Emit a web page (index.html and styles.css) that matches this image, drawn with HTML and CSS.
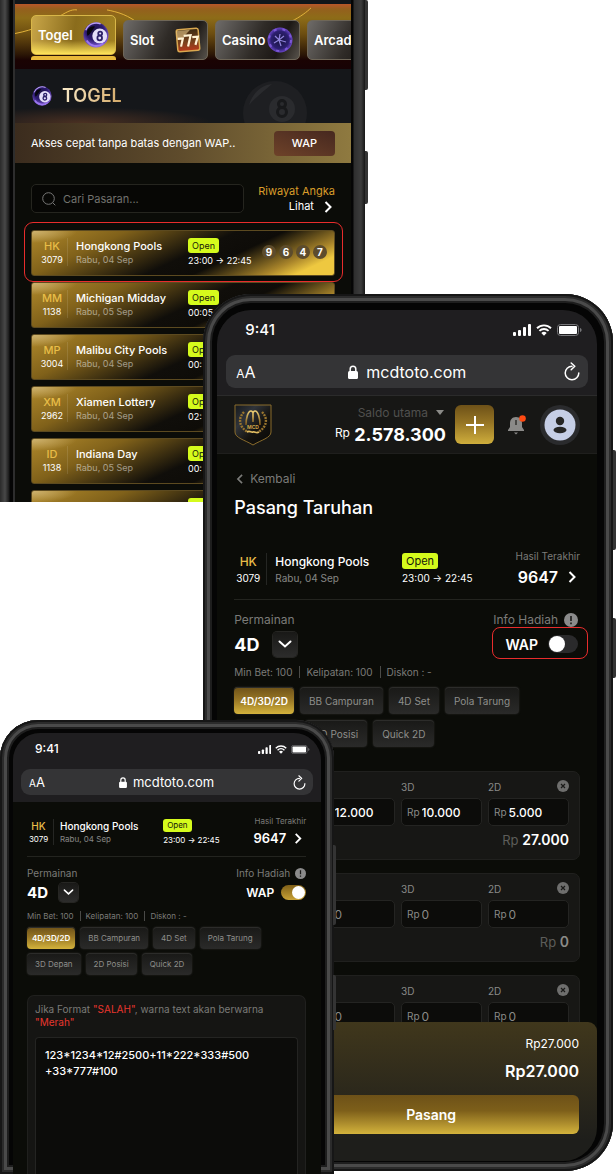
FILE: index.html
```html
<!DOCTYPE html>
<html lang="id">
<head>
  <meta charset="UTF-8">
  <meta name="viewport" content="width=device-width, initial-scale=1">
  <title>MCDTOTO - Panduan WAP</title>
  <link rel="stylesheet" href="styles.css">
</head>
<body>

  <!-- shared icons -->
  <svg class="sprite" aria-hidden="true">
    <defs>
      <linearGradient id="gold" x1="0" y1="0" x2="0" y2="1">
        <stop offset="0" stop-color="#e9cb74"/>
        <stop offset="1" stop-color="#7a5416"/>
      </linearGradient>
      <linearGradient id="shieldFill" x1="0" y1="0" x2="1" y2="1">
        <stop offset="0" stop-color="#15181c"/>
        <stop offset=".3" stop-color="#30343a"/>
        <stop offset=".6" stop-color="#15130f"/>
        <stop offset="1" stop-color="#080808"/>
      </linearGradient>
      <radialGradient id="purple" cx=".45" cy=".35" r=".65">
        <stop offset="0" stop-color="#1a1240"/>
        <stop offset=".55" stop-color="#2c1a70"/>
        <stop offset="1" stop-color="#8a63e0"/>
      </radialGradient>
      <radialGradient id="chipFill">
        <stop offset="0" stop-color="#16123a"/>
        <stop offset=".7" stop-color="#2c1f70"/>
        <stop offset="1" stop-color="#6a45c8"/>
      </radialGradient>
      <linearGradient id="slotFill" x1="0" y1="0" x2="0" y2="1">
        <stop offset="0" stop-color="#3a2a12"/>
        <stop offset=".6" stop-color="#7a431c"/>
        <stop offset="1" stop-color="#b8381a"/>
      </linearGradient>
    </defs>
    <symbol id="i-signal" viewBox="0 0 18 12">
      <rect x="0" y="8" width="3" height="4" rx="1"/>
      <rect x="5" y="6" width="3" height="6" rx="1"/>
      <rect x="10" y="3" width="3" height="9" rx="1"/>
      <rect x="15" y="0" width="3" height="12" rx="1"/>
    </symbol>
    <symbol id="i-wifi" viewBox="0 0 16 12">
      <path d="M1 4.2a10 10 0 0 1 14 0M3.4 6.9a6.6 6.6 0 0 1 9.2 0" fill="none" stroke="currentColor" stroke-width="1.9"/>
      <path d="M8 11.8 5.3 9a4 4 0 0 1 5.4 0z"/>
    </symbol>
    <symbol id="i-battery" viewBox="0 0 25 12">
      <rect x=".5" y=".5" width="21" height="11" rx="3" fill="none" stroke="#77777a"/>
      <rect x="2" y="2" width="18" height="8" rx="1"/>
      <path d="M23 4v4c1-.4 1.6-1.1 1.6-2S24 4.4 23 4z" fill="#77777a"/>
    </symbol>
    <symbol id="i-lock" viewBox="0 0 10 14">
      <rect x="0" y="6" width="10" height="8" rx="1.5"/>
      <path d="M2.2 7V4a2.8 2.8 0 0 1 5.6 0v3" fill="none" stroke="currentColor" stroke-width="1.5"/>
    </symbol>
    <symbol id="i-reload" viewBox="0 0 16 19">
      <path d="M8 4.2A6.8 6.8 0 1 0 14.8 11" fill="none" stroke="currentColor" stroke-width="1.5" stroke-linecap="round"/>
      <path d="M7.2 1l3.6 3.3-3.6 3.4" fill="none" stroke="currentColor" stroke-width="1.5" stroke-linecap="round" stroke-linejoin="round"/>
    </symbol>
    <symbol id="i-right" viewBox="0 0 8 12">
      <path d="M1.5 1 6.5 6l-5 5" fill="none" stroke="currentColor" stroke-width="2"/>
    </symbol>
    <symbol id="i-left" viewBox="0 0 8 12">
      <path d="M6.5 1 1.5 6l5 5" fill="none" stroke="currentColor" stroke-width="2"/>
    </symbol>
    <symbol id="i-down" viewBox="0 0 14 8">
      <path d="M1.5 1.5 7 6.5l5.5-5" fill="none" stroke="currentColor" stroke-width="2" stroke-linecap="round"/>
    </symbol>
    <symbol id="i-info" viewBox="0 0 14 14">
      <circle cx="7" cy="7" r="7" fill="#8b8b8b"/>
      <path d="M7 3v5M7 9.6v1.6" stroke="#1a1a18" stroke-width="1.6"/>
    </symbol>
    <symbol id="i-close" viewBox="0 0 12 12">
      <circle cx="6" cy="6" r="6" fill="#6e6e6d"/>
      <path d="M4 4l4 4M8 4l-4 4" stroke="#1a1a18" stroke-width="1.2"/>
    </symbol>
    <symbol id="i-ball" viewBox="0 0 28 28">
      <circle cx="14" cy="14" r="13.5" fill="url(#purple)"/>
      <path d="M3 9a12 12 0 0 1 16-7" fill="none" stroke="#b79cf5" stroke-width="1.6"/>
      <path d="M4 20a12 12 0 0 0 18 3" fill="none" stroke="#9b76ee" stroke-width="2"/>
      <path d="M5 8c3-4 7-4 8-3-3 3-5 8-8 10-1-2-1-5 0-7z" fill="#07060f"/>
      <circle cx="18" cy="15" r="8" fill="#e4defa"/>
      <g fill="none" stroke="#2b2068" stroke-width="1.9">
        <circle cx="18.5" cy="12.4" r="2.1"/>
        <circle cx="18" cy="17.2" r="2.5"/>
      </g>
    </symbol>
    <symbol id="i-chip" viewBox="0 0 26 26">
      <circle cx="13" cy="13" r="12.5" fill="url(#chipFill)"/>
      <circle cx="13" cy="13" r="11" fill="none" stroke="#7c58d6" stroke-width="2" stroke-dasharray="3 6"/>
      <path d="M8 9l4 4 5-4M12 13l-5 3M12 13l2 6M12 13l7 2M12 13l1-6" fill="none" stroke="#8f82dc" stroke-width="1.3"/>
    </symbol>
    <symbol id="i-slot" viewBox="0 0 26 26">
      <g transform="rotate(-5 13 13)">
        <rect x="2" y="2" width="22" height="22" rx="2" fill="url(#slotFill)" stroke="#d9a850" stroke-width="1.5"/>
        <path d="M2 3h14L6 12H2z" fill="#e9c98c" opacity=".6"/>
        <path d="M3 11h5l-2.5 8M9 8.5h7l-3.5 11M17.5 10.5h5.5l-3 8" fill="none" stroke="#fff3d4" stroke-width="2.2"/>
      </g>
    </symbol>
  </svg>

  <main class="stage">

    <!-- market list -->
    <section class="phone phone-list">
      <span class="side-key key-a"></span>
      <span class="side-key key-b"></span>
      <div class="screen">
        <nav class="tabs">
          <svg class="swirl" viewBox="0 0 336 66" preserveAspectRatio="none" aria-hidden="true">
            <path d="M0 30C40 22 50 4 62 6M92 6c10 2 22 5 34 16M240 30c30-6 48-18 56-26" fill="none" stroke="#e2b23a"/>
          </svg>
          <a href="#" class="tab active">Togel <svg class="tab-icon"><use href="#i-ball"/></svg></a>
          <a href="#" class="tab">Slot <svg class="tab-icon"><use href="#i-slot"/></svg></a>
          <a href="#" class="tab">Casino <svg class="tab-icon"><use href="#i-chip"/></svg></a>
          <a href="#" class="tab">Arcade</a>
        </nav>

        <header class="banner">
          <svg class="banner-icon"><use href="#i-ball"/></svg>
          <h1>TOGEL</h1>
          <svg class="banner-ball" viewBox="0 0 66 44" aria-hidden="true">
            <circle cx="33" cy="34" r="32" fill="#1e1f22"/>
            <path d="M7 26C11 13 20 6 30 5 22 12 14 18 7 26z" fill="#2a2b2e"/>
            <circle cx="40" cy="30" r="13" fill="#2a2b2e"/>
            <g fill="none" stroke="#18191b" stroke-width="3">
              <circle cx="40" cy="25" r="3.5"/>
              <circle cx="40" cy="33" r="4.5"/>
            </g>
          </svg>
        </header>

        <div class="wap-bar">
          <span>Akses cepat tanpa batas dengan WAP..</span>
          <button class="wap-btn">WAP</button>
        </div>

        <div class="search-row">
          <label class="search">
            <svg viewBox="0 0 14 14" aria-hidden="true"><path d="M6.5 .7a5.8 5.8 0 1 0 0 11.6 5.8 5.8 0 0 0 0-11.6zM10.8 10.8l2.5 2.5" fill="none" stroke="#777"/></svg>
            <input type="text" placeholder="Cari Pasaran..." aria-label="Cari Pasaran">
          </label>
          <a href="#" class="history">
            <span class="history-title">Riwayat Angka</span>
            <span class="history-link">Lihat <svg><use href="#i-right"/></svg></span>
          </a>
        </div>

        <div class="markets">
          <article class="market picked">
            <div class="code"><b>HK</b><span>3079</span></div>
            <div class="name"><b>Hongkong Pools</b><span>Rabu, 04 Sep</span></div>
            <div class="hours"><em>Open</em><span>23:00 → 22:45</span></div>
            <div class="balls"><i>9</i><i>6</i><i>4</i><i>7</i></div>
          </article>
          <article class="market">
            <div class="code"><b>MM</b><span>1138</span></div>
            <div class="name"><b>Michigan Midday</b><span>Rabu, 05 Sep</span></div>
            <div class="hours"><em>Open</em><span>00:05</span></div>
          </article>
          <article class="market">
            <div class="code"><b>MP</b><span>3004</span></div>
            <div class="name"><b>Malibu City Pools</b><span>Rabu, 04 Sep</span></div>
            <div class="hours"><em>Open</em><span>00:</span></div>
          </article>
          <article class="market">
            <div class="code"><b>XM</b><span>2962</span></div>
            <div class="name"><b>Xiamen Lottery</b><span>Rabu, 04 Sep</span></div>
            <div class="hours"><em>Open</em><span>02:</span></div>
          </article>
          <article class="market">
            <div class="code"><b>ID</b><span>1138</span></div>
            <div class="name"><b>Indiana Day</b><span>Rabu, 05 Sep</span></div>
            <div class="hours"><em>Open</em><span>00:</span></div>
          </article>
          <article class="market cut">
            <div class="code"></div>
            <div class="name"></div>
            <div class="hours"><em>Open</em></div>
          </article>
        </div>
      </div>
    </section>

    <!-- bet form -->
    <section class="phone phone-bet">
      <span class="side-key key-a"></span>
      <span class="side-key key-b"></span>
      <div class="screen">
        <div class="browser">
          <div class="status">
            <span>9:41</span>
            <div class="status-icons">
              <svg class="signal"><use href="#i-signal"/></svg>
              <svg class="wifi"><use href="#i-wifi"/></svg>
              <svg class="battery"><use href="#i-battery"/></svg>
            </div>
          </div>
          <div class="url">
            <span class="aa"><small>A</small>A</span>
            <span class="host"><svg class="lock"><use href="#i-lock"/></svg>mcdtoto.com</span>
            <svg class="reload"><use href="#i-reload"/></svg>
          </div>
        </div>

        <header class="account">
          <svg class="logo" viewBox="0 0 38 42" role="img" aria-label="MCD">
            <path d="M1 1h36v27c0 6-10 8-18 13C11 36 1 34 1 28z" fill="url(#shieldFill)" stroke="#8a6c2c"/>
            <path d="M12 21c0-7 2-14 5-14s2 6 2 11c0-5-1-11 2-11s5 7 5 14" fill="none" stroke="url(#gold)" stroke-width="1.6"/>
            <path d="M10 8c-7 7-4 16 4 20M28 8c7 7 4 16-4 20" fill="none" stroke="#98742e" stroke-width="2.4" stroke-dasharray="2 1"/>
            <path d="M13 28c3-2 4 1 6 0s3 2 6 0" fill="none" stroke="#e2bd62" stroke-width="1.6"/>
            <text x="19" y="25" class="logo-text">MCD</text>
          </svg>
          <div class="balance">
            <span class="balance-label">Saldo utama <i class="caret"></i></span>
            <span class="balance-value"><small>Rp</small> 2.578.300</span>
          </div>
          <button class="add" aria-label="Deposit">
            <svg viewBox="0 0 18 18"><path d="M9 0v18M0 9h18" stroke="#fff" stroke-width="2"/></svg>
          </button>
          <svg class="bell" viewBox="0 0 18 20" role="img" aria-label="Notifikasi">
            <path d="M8 2c4 0 6 3 6 6v4l2 3v1H0v-1l2-3V8c0-3 2-6 6-6zM6 17.5h4l-2 2z" fill="#8b8a88"/>
            <path d="M8 5v5" stroke="#33322f" stroke-width="1.5"/>
            <circle cx="14.5" cy="3.5" r="3.3" fill="#ff4a12"/>
          </svg>
          <svg class="avatar" viewBox="0 0 40 40" role="img" aria-label="Akun">
            <circle cx="20" cy="20" r="20" fill="#2a2b2d"/>
            <circle cx="20" cy="20" r="15.5" fill="#c5cee6"/>
            <circle cx="20" cy="16" r="4.2" fill="#252525"/>
            <ellipse cx="20" cy="25" rx="6.5" ry="3.2" fill="#252525"/>
          </svg>
        </header>

        <div class="page">
          <a href="#" class="back"><svg><use href="#i-left"/></svg>Kembali</a>
          <h2>Pasang Taruhan</h2>

          <div class="draw">
            <div class="code"><b>HK</b><span>3079</span></div>
            <div class="name"><b>Hongkong Pools</b><span>Rabu, 04 Sep</span></div>
            <div class="hours"><em>Open</em><span>23:00 → 22:45</span></div>
            <div class="last"><span>Hasil Terakhir</span><b>9647 <svg><use href="#i-right"/></svg></b></div>
          </div>

          <div class="game">
            <div class="game-col">
              <label for="game-a">Permainan</label>
              <div class="picker">
                <select id="game-a"><option>4D</option><option>3D</option><option>2D</option></select>
                <span class="picker-arrow"><svg><use href="#i-down"/></svg></span>
              </div>
            </div>
            <div class="game-col right">
              <span class="prize">Info Hadiah <svg><use href="#i-info"/></svg></span>
              <label class="wap picked">WAP <input type="checkbox" class="toggle"></label>
            </div>
          </div>

          <p class="limits"><span>Min Bet: 100</span><span>Kelipatan: 100</span><span>Diskon : -</span></p>

          <div class="chips">
            <button class="chip on">4D/3D/2D</button>
            <button class="chip">BB Campuran</button>
            <button class="chip">4D Set</button>
            <button class="chip">Pola Tarung</button>
            <button class="chip">3D Depan</button>
            <button class="chip">2D Posisi</button>
            <button class="chip">Quick 2D</button>
          </div>

          <div class="bets">
            <div class="bet filled">
              <div class="field"><label for="n1">Angka</label><div class="box"><input id="n1"></div></div>
              <div class="field"><label for="a1">4D</label><div class="box">Rp <input id="a1" value="12.000"></div></div>
              <div class="field"><label for="b1">3D</label><div class="box">Rp <input id="b1" value="10.000"></div></div>
              <div class="field"><label for="c1">2D</label><div class="box">Rp <input id="c1" value="5.000"></div></div>
              <button class="remove" aria-label="Hapus baris"><svg><use href="#i-close"/></svg></button>
              <p class="sum">Rp <b>27.000</b></p>
            </div>
            <div class="bet">
              <div class="field"><label for="n2">Angka</label><div class="box"><input id="n2"></div></div>
              <div class="field"><label for="a2">4D</label><div class="box">Rp <input id="a2" value="0"></div></div>
              <div class="field"><label for="b2">3D</label><div class="box">Rp <input id="b2" value="0"></div></div>
              <div class="field"><label for="c2">2D</label><div class="box">Rp <input id="c2" value="0"></div></div>
              <button class="remove" aria-label="Hapus baris"><svg><use href="#i-close"/></svg></button>
              <p class="sum">Rp <b>0</b></p>
            </div>
            <div class="bet">
              <div class="field"><label for="n3">Angka</label><div class="box"><input id="n3"></div></div>
              <div class="field"><label for="a3">4D</label><div class="box">Rp <input id="a3" value="0"></div></div>
              <div class="field"><label for="b3">3D</label><div class="box">Rp <input id="b3" value="0"></div></div>
              <div class="field"><label for="c3">2D</label><div class="box">Rp <input id="c3" value="0"></div></div>
              <button class="remove" aria-label="Hapus baris"><svg><use href="#i-close"/></svg></button>
            </div>
          </div>
        </div>

        <footer class="checkout">
          <span class="subtotal">Rp27.000</span>
          <strong class="total">Rp27.000</strong>
          <button class="submit">Pasang</button>
        </footer>
      </div>
    </section>

    <!-- wap form -->
    <section class="phone phone-wap">
      <span class="side-key key-a"></span>
      <span class="side-key key-b"></span>
      <div class="screen">
        <div class="browser">
          <div class="status">
            <span>9:41</span>
            <div class="status-icons">
              <svg class="signal"><use href="#i-signal"/></svg>
              <svg class="wifi"><use href="#i-wifi"/></svg>
              <svg class="battery"><use href="#i-battery"/></svg>
            </div>
          </div>
          <div class="url">
            <span class="aa"><small>A</small>A</span>
            <span class="host"><svg class="lock"><use href="#i-lock"/></svg>mcdtoto.com</span>
            <svg class="reload"><use href="#i-reload"/></svg>
          </div>
        </div>

        <div class="page">
          <div class="draw">
            <div class="code"><b>HK</b><span>3079</span></div>
            <div class="name"><b>Hongkong Pools</b><span>Rabu, 04 Sep</span></div>
            <div class="hours"><em>Open</em><span>23:00 → 22:45</span></div>
            <div class="last"><span>Hasil Terakhir</span><b>9647 <svg><use href="#i-right"/></svg></b></div>
          </div>

          <div class="game">
            <div class="game-col">
              <label for="game-b">Permainan</label>
              <div class="picker">
                <select id="game-b"><option>4D</option><option>3D</option><option>2D</option></select>
                <span class="picker-arrow"><svg><use href="#i-down"/></svg></span>
              </div>
            </div>
            <div class="game-col right">
              <span class="prize">Info Hadiah <svg><use href="#i-info"/></svg></span>
              <label class="wap">WAP <input type="checkbox" class="toggle" checked></label>
            </div>
          </div>

          <p class="limits"><span>Min Bet: 100</span><span>Kelipatan: 100</span><span>Diskon : -</span></p>

          <div class="chips">
            <button class="chip on">4D/3D/2D</button>
            <button class="chip">BB Campuran</button>
            <button class="chip">4D Set</button>
            <button class="chip">Pola Tarung</button>
            <button class="chip">3D Depan</button>
            <button class="chip">2D Posisi</button>
            <button class="chip">Quick 2D</button>
          </div>

          <div class="format">
            <label for="format">Jika Format <mark>"SALAH"</mark>, warna text akan berwarna <mark>"Merah"</mark></label>
            <textarea id="format" spellcheck="false">123*1234*12#2500+11*222*333#500
+33*777#100</textarea>
          </div>
        </div>
      </div>
    </section>

  </main>

</body>
</html>
```

FILE: styles.css
```css
* {
  box-sizing: border-box;
}

body {
  margin: 0;
  background: #fff;
  color: #fff;
  font-family: Inter, "Liberation Sans", sans-serif;
}

h1, h2, p {
  margin: 0;
}

button, input, select, textarea {
  font-family: inherit;
  color: inherit;
  border: none;
  margin: 0;
  padding: 0;
}

a {
  color: inherit;
  text-decoration: none;
}

svg {
  display: block;
  flex: none;
  fill: currentColor;
}

em, i {
  font-style: normal;
}

.sprite {
  position: absolute;
  width: 0;
  height: 0;
}

/* the three phones share one grid cell and overlap */
.stage {
  display: grid;
  height: 1174px;
  overflow: hidden;
}

.phone {
  grid-area: 1 / 1;
  position: relative;
  background: #050505;
  box-shadow: inset 0 0 0 2px #161616, inset 0 0 0 4px #2b2b2b, inset 0 0 0 7px #4a4a4a, inset 0 0 0 9px #1e1e1e;
}

.screen {
  background: #0b0c08;
  height: 100%;
  overflow: hidden;
}

.side-key {
  position: absolute;
  right: -3px;
  width: 3px;
  background: #343434;
  border-radius: 0 2px 2px 0;
}

/* ---------- phone 1 ---------- */
.phone-list {
  width: 59.25%;
  height: 502px;
  padding: 0 14px 0 14px;
  background: linear-gradient(90deg, #2a2a2a, #484848 5px, #1b1b1b 9px, #050505 10px, #050505 13px, #555 14px, #050505 15px, #050505 calc(100% - 12px), #2e2e2e calc(100% - 11px), #3c3c3c calc(100% - 4px), #171717);
  box-shadow: none;
}

.phone-list .screen {
  margin-left: 1px;
}

.phone-list .key-a { top: 0; height: 90px; }
.phone-list .key-b { top: 151px; height: 53px; }

.tabs {
  position: relative;
  display: flex;
  align-items: flex-end;
  gap: 7px;
  height: 69px;
  padding: 0 0 9px 16px;
  border-top: 4px solid #11161a;
  background: linear-gradient(#b8562a, #94601d 5px, #8d6c18 14px, #6c4d10 30px, #2d1806 50px, #1a0303 56px, #170305);
}

.swirl {
  position: absolute;
  inset: 0;
  width: 100%;
  height: 100%;
}

.tab {
  position: relative;
  display: flex;
  align-items: center;
  justify-content: space-between;
  flex: 0 0 85px;
  height: 40px;
  padding: 0 6px;
  border: 1px solid #6f6758;
  border-radius: 5px;
  background: linear-gradient(115deg, #6e6b68, #2f2b27 50%, #1c1815 75%, #57524b);
  font-size: 13px;
  font-weight: 600;
}

.tab-icon {
  width: 26px;
  height: 26px;
}

.tab.active {
  margin-bottom: 5px;
  border-color: #d8b648;
  background: linear-gradient(#ffe45a00 65%, #ffe45a), linear-gradient(100deg, #c9a648, #8a6c1c 50%, #a38322);
}

.tab.active::after {
  content: "";
  position: absolute;
  left: -1px;
  right: -1px;
  bottom: -6px;
  height: 4px;
  border-radius: 3px 3px 0 0;
  background: #e9b93a;
}

.banner {
  display: flex;
  align-items: center;
  gap: 10px;
  height: 54px;
  padding-left: 17px;
  background: radial-gradient(ellipse 130px 16px at 20% 100%, #4a3022, #4a302200), #15171a;
}

.banner-icon {
  width: 20px;
  height: 20px;
}

.banner h1 {
  font-size: 18px;
  font-weight: 600;
  line-height: 24px;
  color: transparent;
  background: linear-gradient(100deg, #fbeccb, #d2a765);
  background-clip: text;
}

.banner-ball {
  width: 66px;
  height: 44px;
  margin: 10px 43px 0 auto;
}

.wap-bar {
  display: flex;
  align-items: center;
  justify-content: space-between;
  height: 40px;
  padding: 0 16px;
  background: linear-gradient(90deg, #3b2c1e, #5f4c2c 50%, #8f7a40);
  font-size: 11px;
}

.wap-btn {
  width: 61px;
  height: 25px;
  border-radius: 4px;
  background: linear-gradient(200deg, #46281f, #6e4229);
  font-size: 11px;
  font-weight: 500;
}

.search-row {
  display: flex;
  justify-content: space-between;
  padding: 21px 16px 16px;
}

.search {
  display: flex;
  align-items: center;
  gap: 7px;
  flex: 0 1 213px;
  height: 29px;
  padding: 0 10px;
  border: 1px solid #25251f;
  border-radius: 5px;
  background: #070705;
}

.search svg {
  width: 14px;
  height: 14px;
}

.search input {
  width: 100%;
  background: none;
  font-size: 11px;
}

.search input::placeholder {
  color: #72726e;
}

.history {
  display: flex;
  flex-direction: column;
  align-items: flex-end;
  font-size: 11px;
  line-height: 15px;
}

.history-title {
  color: #d99d2a;
}

.history-link {
  display: flex;
  align-items: center;
  gap: 10px;
  padding-right: 3px;
}

.history-link svg {
  width: 8px;
  height: 12px;
}

.markets {
  display: grid;
  gap: 6px;
  padding: 0 16px;
}

.market {
  position: relative;
  display: grid;
  grid-template-columns: 36px 112px 78px 1fr;
  align-items: center;
  height: 46px;
  padding-bottom: 2px;
  border: 1px solid #5c4a20;
  border-radius: 3px;
  background: radial-gradient(ellipse 45px 12px at 0 0, #cdb270, #cdb27000), linear-gradient(155deg, #b0892b, #80611a 24%, #100e0a 52%, #0e0c08 64%, #a8842a 82%, #eec840 90%);
}

.market.cut {
  align-items: start;
  padding-top: 7px;
}

.market.picked::after {
  content: "";
  position: absolute;
  inset: -9px -9px -7px -8px;
  border: 1px solid #e82c2c;
  border-radius: 9px;
}

.code, .name, .hours, .last {
  display: flex;
  flex-direction: column;
}

.code {
  align-items: center;
  border-right: 1px solid #ffffff1c;
}

.market .code {
  padding-left: 5px;
}

.code b {
  color: #e8bd48;
  font-size: 12px;
  font-weight: 500;
  line-height: 16px;
}

.market .code b {
  font-size: 11px;
}

.code span {
  font-size: 9px;
  line-height: 12px;
}

.name {
  padding-left: 8px;
}

.name b {
  font-size: 11px;
  font-weight: 500;
  line-height: 16px;
}

.name span {
  color: #ffffff80;
  font-size: 9px;
  line-height: 12px;
}

.hours {
  align-items: flex-start;
  padding-left: 8px;
  font-size: 9px;
  line-height: 12px;
  white-space: nowrap;
}

.hours em {
  margin-bottom: 2px;
  padding: 0 4px;
  border-radius: 3px;
  background: #d5fb1c;
  color: #16180a;
  font-size: 9px;
  line-height: 15px;
}

.balls {
  display: flex;
  justify-content: flex-end;
  gap: 3px;
  padding-right: 7px;
}

.balls i {
  width: 14px;
  height: 14px;
  border-radius: 50%;
  background: #5d4c2c;
  font-size: 10px;
  font-weight: 700;
  line-height: 14px;
  text-align: center;
}

/* ---------- shared by phones 2 and 3 ---------- */
.phone-bet .screen, .phone-wap .screen {
  display: flex;
  flex-direction: column;
}

.browser {
  background: #1f1e20;
}

.status, .status-icons, .url, .host {
  display: flex;
  align-items: center;
}

.status, .url {
  justify-content: space-between;
}

.status {
  font-weight: 500;
}

.signal { aspect-ratio: 18 / 12; }
.wifi { aspect-ratio: 16 / 12; }
.battery { aspect-ratio: 25 / 12; }

.url {
  border-radius: 9px;
  background: #343436;
}

.host {
  padding-right: 5px;
}

.draw {
  display: grid;
  align-items: center;
  border-bottom: 1px solid #23241f;
}

.last {
  align-items: flex-end;
  color: #7b7b78;
}

.last b {
  display: flex;
  align-items: center;
  gap: 10px;
  padding-right: 4px;
  color: #fff;
  font-weight: 600;
}

.last svg {
  width: 8px;
}

.game, .picker, .prize, .wap {
  display: flex;
  justify-content: space-between;
  align-items: center;
}

.game-col label:first-child, .prize {
  display: flex;
  color: #7b7b78;
}

.game-col.right {
  display: flex;
  flex-direction: column;
  align-items: flex-end;
}

.picker {
  position: relative;
  justify-content: flex-start;
}

.picker select {
  appearance: none;
  background: none;
  font-weight: 700;
}

.picker-arrow {
  position: absolute;
  right: 0;
  display: grid;
  place-items: center;
  border-radius: 4px;
  background: linear-gradient(#191917, #2c2c2b);
  box-shadow: 0 0 0 1px #262623;
  pointer-events: none;
}

.wap {
  position: relative;
  font-weight: 600;
}

.wap.picked::after {
  content: "";
  position: absolute;
  inset: -6px -10px -4px -13px;
  border: 1px solid #e82c2c;
  border-radius: 8px;
}

.toggle {
  appearance: none;
  display: flex;
  border-radius: 10px;
  background: #2a2a2b;
}

.toggle::before {
  content: "";
  height: 100%;
  aspect-ratio: 1;
  border-radius: 50%;
  background: #fff;
}

.toggle:checked {
  justify-content: flex-end;
  background: linear-gradient(#806018, #c9a236);
}

.limits {
  display: flex;
  color: #7b7b78;
}

.limits span + span {
  border-left: 1px solid #4a4a47;
}

.chips {
  display: flex;
  flex-wrap: wrap;
}

.chip {
  border-radius: 4px;
  background: linear-gradient(#191917, #2a2a29);
  box-shadow: inset 0 1px 0 #2c2c2a, 0 0 2px #2e2e2c;
  color: #8e8e8b;
  white-space: nowrap;
}

.chip.on {
  background: linear-gradient(#6d5118, #957424 45%, #d4b33c);
  color: #fff;
  font-weight: 600;
}

/* ---------- phone 2 ---------- */
.phone-bet {
  margin: 294px 3px 0 33%;
  height: 877px;
  padding: 16px 16px 10px 14px;
  border-radius: 48px;
}

.phone-bet .screen {
  border-radius: 34px;
}

.phone-bet .key-a { top: 156px; height: 100px; }
.phone-bet .key-b { top: 324px; height: 60px; }

.phone-bet .browser {
  padding: 10px 9px 7px;
  border-bottom: 1px solid #2b2b2b;
}

.phone-bet .status {
  padding: 0 6px 0 19px;
  font-size: 15px;
  line-height: 20px;
}

.phone-bet .status-icons {
  gap: 5px;
}

.phone-bet .status svg {
  height: 12px;
}

.phone-bet .url {
  height: 33px;
  margin-top: 15px;
  padding: 0 8px 0 10px;
  font-size: 16px;
}

.phone-bet .aa small {
  font-size: 12px;
}

.phone-bet .host {
  gap: 8px;
}

.phone-bet .lock {
  width: 10px;
  height: 14px;
}

.phone-bet .reload {
  width: 16px;
  height: 19px;
}

.account {
  display: flex;
  align-items: center;
  height: 58px;
  padding: 0 17px;
  border-bottom: 1px solid #1f1f1d;
  background: #171715;
}

.logo {
  width: 38px;
  height: 42px;
}

.logo-text {
  fill: #c9a046;
  font-size: 5px;
  font-weight: 700;
  text-anchor: middle;
}

.balance {
  display: flex;
  flex-direction: column;
  align-items: flex-end;
  margin: 0 9px 0 auto;
}

.balance-label {
  display: flex;
  align-items: center;
  gap: 8px;
  padding-right: 2px;
  color: #50504e;
  font-size: 12px;
  line-height: 18px;
}

.caret {
  border: 4px solid transparent;
  border-top: 5px solid #8b8b88;
  border-bottom: none;
}

.balance-value {
  font-size: 18px;
  font-weight: 700;
  line-height: 22px;
}

.balance-value small {
  font-size: 12px;
  font-weight: 400;
  vertical-align: 4px;
}

.add {
  display: grid;
  place-items: center;
  width: 39px;
  height: 39px;
  border-radius: 6px;
  background: linear-gradient(#6d5118, #957424 45%, #cfae3c);
}

.add svg {
  width: 18px;
  height: 18px;
}

.bell {
  width: 18px;
  height: 20px;
  margin: 0 14px;
}

.avatar {
  width: 40px;
  height: 40px;
}

.phone-bet .page {
  flex: 1;
  min-height: 0;
  padding: 16px 17px 0;
}

.back {
  display: flex;
  align-items: center;
  gap: 6px;
  padding-left: 2px;
  color: #7b7b78;
  font-size: 12px;
  line-height: 18px;
}

.back svg {
  width: 8px;
  height: 10px;
}

.page h2 {
  margin-top: 8px;
  font-size: 18px;
  font-weight: 500;
  line-height: 24px;
}

.phone-bet .draw {
  grid-template-columns: 33px 1fr 111px 75px;
  margin-top: 28px;
  padding-bottom: 9px;
}

.phone-bet .code b, .phone-bet .name b {
  font-size: 12px;
  line-height: 18px;
}

.phone-bet .code {
  padding-right: 4px;
}

.phone-bet .code span, .phone-bet .name span, .phone-bet .hours {
  font-size: 10px;
  line-height: 14px;
}

.phone-bet .hours em {
  padding: 0 4px;
  font-size: 11px;
  line-height: 16px;
}

.phone-bet .last {
  font-size: 10px;
  line-height: 16px;
  white-space: nowrap;
}

.phone-bet .last b {
  font-size: 16px;
  line-height: 26px;
}

.phone-bet .last svg {
  height: 14px;
}

.phone-bet .game {
  margin-top: 11px;
  font-size: 12px;
}

.phone-bet .game-col label:first-child, .phone-bet .prize {
  gap: 6px;
  font-size: 12px;
  line-height: 18px;
}

.phone-bet .game-col.right {
  padding-right: 2px;
}

.prize svg {
  width: 14px;
  height: 14px;
}

.phone-bet .picker {
  width: 63px;
  height: 30px;
}

.phone-bet .picker select {
  width: 100%;
  font-size: 18px;
}

.phone-bet .picker-arrow {
  width: 24px;
  height: 25px;
}

.picker-arrow svg {
  width: 14px;
  height: 8px;
}

.phone-bet .wap {
  gap: 10px;
  height: 22px;
  margin: 4px 0;
  font-size: 14px;
}

.phone-bet .toggle {
  width: 30px;
  height: 18px;
  padding: 1px;
}

.phone-bet .limits {
  margin-top: 7px;
  font-size: 10px;
  line-height: 12px;
}

.phone-bet .limits span {
  padding-right: 7px;
}

.phone-bet .limits span + span {
  padding-left: 6px;
}

.phone-bet .chips {
  gap: 6px;
  margin-top: 9px;
}

.phone-bet .chip {
  height: 27px;
  padding: 0 9px;
  font-size: 10px;
}

.phone-bet .chip.on {
  padding: 0 6px;
}

.bets {
  display: grid;
  gap: 13px;
  margin-top: 24px;
}

.bet {
  position: relative;
  display: grid;
  grid-template-columns: 4fr 5fr 5fr 5fr;
  gap: 0 6px;
  height: 89px;
  padding: 6px 10px 6px 8px;
  border: 1px solid #20201e;
  border-radius: 7px;
  background: #171715;
}

.field {
  min-width: 0;
  color: #8a8a87;
  font-size: 10px;
}

.field label {
  display: block;
  line-height: 18px;
}

.box {
  display: flex;
  align-items: center;
  gap: 2px;
  height: 28px;
  margin-top: 2px;
  padding: 0 5px;
  border: 1px solid #242422;
  border-radius: 5px;
  background: #0c0c0a;
}

.box input {
  width: 100%;
  min-width: 0;
  background: none;
  font-size: 12px;
}

.filled .box input {
  color: #fff;
  font-weight: 500;
}

.remove {
  position: absolute;
  top: 8px;
  right: 10px;
  background: none;
}

.remove svg {
  width: 12px;
  height: 12px;
}

.sum {
  grid-column: 1 / -1;
  color: #5d5d5a;
  font-size: 13px;
  line-height: 28px;
  text-align: right;
}

.sum b {
  color: #8a8a87;
  font-size: 14px;
  font-weight: 600;
}

.filled .sum b {
  color: #fff;
}

.checkout {
  position: relative;
  display: flex;
  flex-direction: column;
  align-items: flex-end;
  height: 139px;
  padding: 12px 18px 0 66px;
  border-radius: 9px 9px 0 0;
  background: linear-gradient(#40371c, #1e1e1b 85%);
}

.subtotal {
  font-size: 12px;
  line-height: 20px;
}

.total {
  margin: 6px 0 13px;
  font-size: 16px;
  font-weight: 600;
  line-height: 22px;
}

.submit {
  width: 100%;
  height: 39px;
  border-radius: 6px;
  background: linear-gradient(#6d5118, #7d5f1a 40%, #d4b33c);
  font-size: 14px;
  font-weight: 600;
}

/* ---------- phone 3 ---------- */
.phone-wap {
  width: 54.25%;
  height: 454px;
  margin-top: 720px;
  padding: 13px 13px 0;
  border-radius: 38px 38px 0 0;
}

.phone-wap .screen {
  border-radius: 27px 27px 0 0;
}

.phone-wap .key-a { top: 125px; right: -2px; height: 80px; }
.phone-wap .key-b { top: 255px; right: -2px; height: 55px; }

.phone-wap .browser {
  padding: 8px 8px 7px;
}

.phone-wap .status {
  padding: 0 3px 0 14px;
  font-size: 12px;
  line-height: 16px;
}

.phone-wap .status-icons {
  gap: 4px;
}

.phone-wap .status svg {
  height: 9px;
}

.phone-wap .url {
  height: 26px;
  margin-top: 12px;
  padding: 0 7px 0 8px;
  font-size: 13px;
}

.phone-wap .aa small {
  font-size: 10px;
}

.phone-wap .host {
  gap: 6px;
}

.phone-wap .lock {
  width: 8px;
  height: 11px;
}

.phone-wap .reload {
  width: 13px;
  height: 15px;
}

.phone-wap .page {
  flex: 1;
  display: flex;
  flex-direction: column;
  padding: 13px 15px 0 14px;
}

.phone-wap .draw {
  grid-template-columns: 27px 1fr 93px 58px;
  padding-bottom: 7px;
}

.phone-wap .code {
  padding-right: 3px;
}

.phone-wap .name {
  padding-left: 6px;
}

.phone-wap .code b, .phone-wap .name b {
  font-size: 10px;
  line-height: 14px;
}

.phone-wap .code span, .phone-wap .name span, .phone-wap .hours {
  font-size: 8px;
  line-height: 12px;
}

.phone-wap .hours em {
  padding: 0 4px;
  font-size: 8px;
  line-height: 13px;
}

.phone-wap .last {
  font-size: 8px;
  line-height: 12px;
  white-space: nowrap;
}

.phone-wap .last b {
  gap: 8px;
  font-size: 13px;
  line-height: 22px;
}

.phone-wap .last svg {
  height: 11px;
}

.phone-wap .game {
  margin-top: 9px;
}

.phone-wap .game-col label:first-child, .phone-wap .prize {
  gap: 5px;
  font-size: 10px;
  line-height: 14px;
}

.phone-wap .prize svg {
  width: 11px;
  height: 11px;
}

.phone-wap .picker {
  width: 51px;
  height: 24px;
}

.phone-wap .picker select {
  width: 100%;
  font-size: 15px;
}

.phone-wap .picker-arrow {
  width: 19px;
  height: 19px;
}

.phone-wap .picker-arrow svg {
  width: 11px;
  height: 6px;
}

.phone-wap .wap {
  gap: 7px;
  height: 24px;
  font-size: 12px;
}

.phone-wap .toggle {
  width: 25px;
  height: 15px;
  padding: 1px;
}

.phone-wap .limits {
  margin-top: 7px;
  font-size: 8px;
  line-height: 10px;
}

.phone-wap .limits span {
  padding-right: 6px;
}

.phone-wap .limits span + span {
  padding-left: 5px;
}

.phone-wap .chips {
  gap: 4px 5px;
  margin-top: 6px;
}

.phone-wap .chip {
  height: 22px;
  padding: 0 8px;
  font-size: 8px;
}

.phone-wap .chip.on {
  padding: 0 5px;
}

.format {
  flex: 1;
  display: flex;
  flex-direction: column;
  margin-top: 20px;
  padding: 7px 7px 0;
  border: 1px solid #20201e;
  border-bottom: none;
  border-radius: 7px 7px 0 0;
  background: #151513;
  color: #7b7b78;
  font-size: 10px;
  line-height: 13px;
}

.format mark {
  background: none;
  color: #e8352e;
}

.format textarea {
  flex: 1;
  width: 100%;
  margin-top: 8px;
  padding: 9px;
  border: 1px solid #242422;
  border-bottom: none;
  border-radius: 4px 4px 0 0;
  background: #0c0c0a;
  color: #fff;
  font-size: 11px;
  font-weight: 500;
  line-height: 16px;
  resize: none;
}
```
